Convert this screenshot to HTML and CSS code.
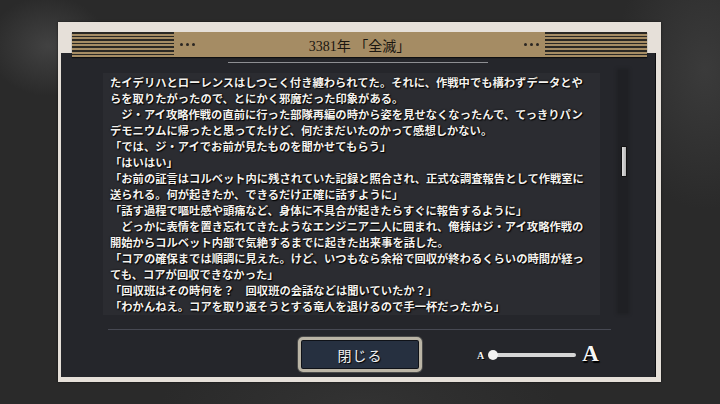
FILE: index.html
```html
<!DOCTYPE html>
<html lang="ja">
<head>
<meta charset="utf-8">
<link rel="stylesheet" href="styles.css">
</head>
<body>
<div class="frame">
  <div class="band">
    <div class="stripes"></div>
    <div class="dots"><i></i><i></i><i></i></div>
    <div class="title">3381年 「全滅」</div>
    <div class="dots"><i></i><i></i><i></i></div>
    <div class="stripes"></div>
  </div>
  <div class="panel">
    <div class="rule"></div>
    <div class="content">
      <div class="textbox">
        <p>たイデリハとローレンスはしつこく付き纏わられてた。それに、作戦中でも構わずデータとや</p>
        <p>らを取りたがったので、とにかく邪魔だった印象がある。</p>
        <p>　ジ・アイ攻略作戦の直前に行った部隊再編の時から姿を見せなくなったんで、てっきりパン</p>
        <p>デモニウムに帰ったと思ってたけど、何だまだいたのかって感想しかない。</p>
        <p>「では、ジ・アイでお前が見たものを聞かせてもらう」</p>
        <p>「はいはい」</p>
        <p>「お前の証言はコルベット内に残されていた記録と照合され、正式な調査報告として作戦室に</p>
        <p>送られる。何が起きたか、できるだけ正確に話すように」</p>
        <p>「話す過程で嘔吐感や頭痛など、身体に不具合が起きたらすぐに報告するように」</p>
        <p>　どっかに表情を置き忘れてきたようなエンジニア二人に囲まれ、俺様はジ・アイ攻略作戦の</p>
        <p>開始からコルベット内部で気絶するまでに起きた出来事を話した。</p>
        <p>「コアの確保までは順調に見えた。けど、いつもなら余裕で回収が終わるくらいの時間が経っ</p>
        <p>ても、コアが回収できなかった」</p>
        <p>「回収班はその時何を？　回収班の会話などは聞いていたか？」</p>
        <p>「わかんねえ。コアを取り返そうとする竜人を退けるので手一杯だったから」</p>
      </div>
      <div class="track"><div class="thumb"></div></div>
    </div>
    <div class="separator"></div>
    <div class="bottom">
      <button class="close">閉じる</button>
      <div class="slider">
        <span class="a-small">A</span>
        <span class="knob"></span>
        <span class="bar"></span>
        <span class="a-big">A</span>
      </div>
    </div>
  </div>
</div>
</body>
</html>
```
FILE: styles.css
```css
* { box-sizing: border-box; }
html, body { margin: 0; padding: 0; }
body {
  width: 720px;
  height: 404px;
  overflow: hidden;
  background:
    radial-gradient(ellipse 60px 50px at 48px 46px, rgba(110,110,110,0.35), transparent),
    radial-gradient(ellipse 90px 140px at 705px 70px, rgba(90,90,90,0.35), transparent),
    radial-gradient(ellipse 200px 60px at 360px 404px, rgba(70,70,70,0.3), transparent),
    #2a2a2a;
  font-family: "Noto Sans CJK JP", "Noto Sans", sans-serif;
  padding-top: 22px;
  padding-left: 58px;
}
.frame {
  width: 603px;
  height: 360px;
  background: #e6e0d9;
  padding: 10px 5px 5px 3px;
  box-shadow: 0 0 2px rgba(0,0,0,0.6);
}
.band {
  position: relative;
  z-index: 1;
  margin-left: 11px;
  width: 575px;
  height: 25px;
  background: #a58c64;
  display: flex;
  align-items: center;
  box-shadow: 0 1px 1px rgba(0,0,0,0.6);
}
.stripes {
  width: 102px;
  height: 25px;
  background: repeating-linear-gradient(to bottom, #2a2824 0 1.6px, #a58c64 1.6px 3.6px);
}
.dots {
  display: flex;
  gap: 3px;
  margin: 0 6px;
}
.dots i {
  width: 3px;
  height: 3px;
  border-radius: 50%;
  background: #2a2622;
}
.title {
  flex: 1;
  text-align: center;
  font-family: "Liberation Serif", "Noto Sans CJK JP", serif;
  font-size: 14px;
  color: #1a1610;
  padding-top: 1px;
}
.panel {
  margin-top: -4px;
  width: 595px;
  height: 324px;
  background: #25262b;
  border-right: 1px solid #0d0d10;
  display: flex;
  flex-direction: column;
}
.rule {
  margin: 9px auto 0;
  width: 260px;
  height: 1px;
  background: #8e8f93;
}
.content {
  margin-top: 10px;
  display: flex;
  padding-left: 42px;
  gap: 18px;
  height: 242px;
}
.textbox {
  width: 497px;
  height: 242px;
  background: #2b2c31;
  padding: 1px 0 0 7px;
  overflow: hidden;
}
.textbox p {
  margin: 0;
  white-space: nowrap;
  font-size: 11.3px;
  line-height: 16px;
  font-weight: 700;
  color: #f4f2ee;
  text-shadow: 1px 1px 1px #000, 0 0 2px #000;
}
.track {
  width: 10px;
  margin-top: -3px;
  height: 243px;
  background: #1f2024;
  box-shadow: 0 0 3px 1px #1f2024;
  padding-top: 76px;
  padding-left: 3px;
}
.thumb {
  width: 6px;
  height: 31px;
  background: linear-gradient(to right, #e0e0e0, #b0b0b0);
  border: 1px solid #111;
  border-radius: 1px;
}
.separator {
  margin-top: 14px;
  margin-left: 47px;
  width: 503px;
  height: 1px;
  background: #474953;
}
.bottom {
  margin-top: 7px;
  display: flex;
  align-items: center;
  padding-left: 237px;
  gap: 55px;
}
.close {
  width: 124px;
  height: 35px;
  border: 3px solid #bbb5a6;
  border-radius: 5px;
  background: #263040;
  box-shadow: inset 0 0 0 1px #0f1218, 0 0 0 1px #4a4a4a;
  color: #f2f2f2;
  font-family: "Noto Sans CJK JP", sans-serif;
  font-size: 14px;
  letter-spacing: 1px;
  text-shadow: 1px 1px 1px #000;
  padding: 0;
}
.slider {
  display: flex;
  align-items: center;
  height: 35px;
}
.a-small {
  font-family: "Liberation Serif", serif;
  font-weight: 700;
  font-size: 10px;
  color: #f5f5f5;
  text-shadow: 1px 1px 0 #000;
  margin-right: 4px;
  padding-top: 2px;
}
.knob {
  width: 10px;
  height: 10px;
  border-radius: 50%;
  background: #f2f2f2;
  position: relative;
  z-index: 1;
}
.bar {
  width: 80px;
  height: 4px;
  margin-left: -2px;
  border-radius: 2px;
  background: #d6d6d6;
}
.a-big {
  font-family: "Liberation Serif", serif;
  font-weight: 700;
  font-size: 23px;
  color: #f7f7f7;
  text-shadow: 1px 1px 0 #000, 1px 2px 1px #000;
  margin-left: 6px;
  padding-bottom: 1px;
}
```
